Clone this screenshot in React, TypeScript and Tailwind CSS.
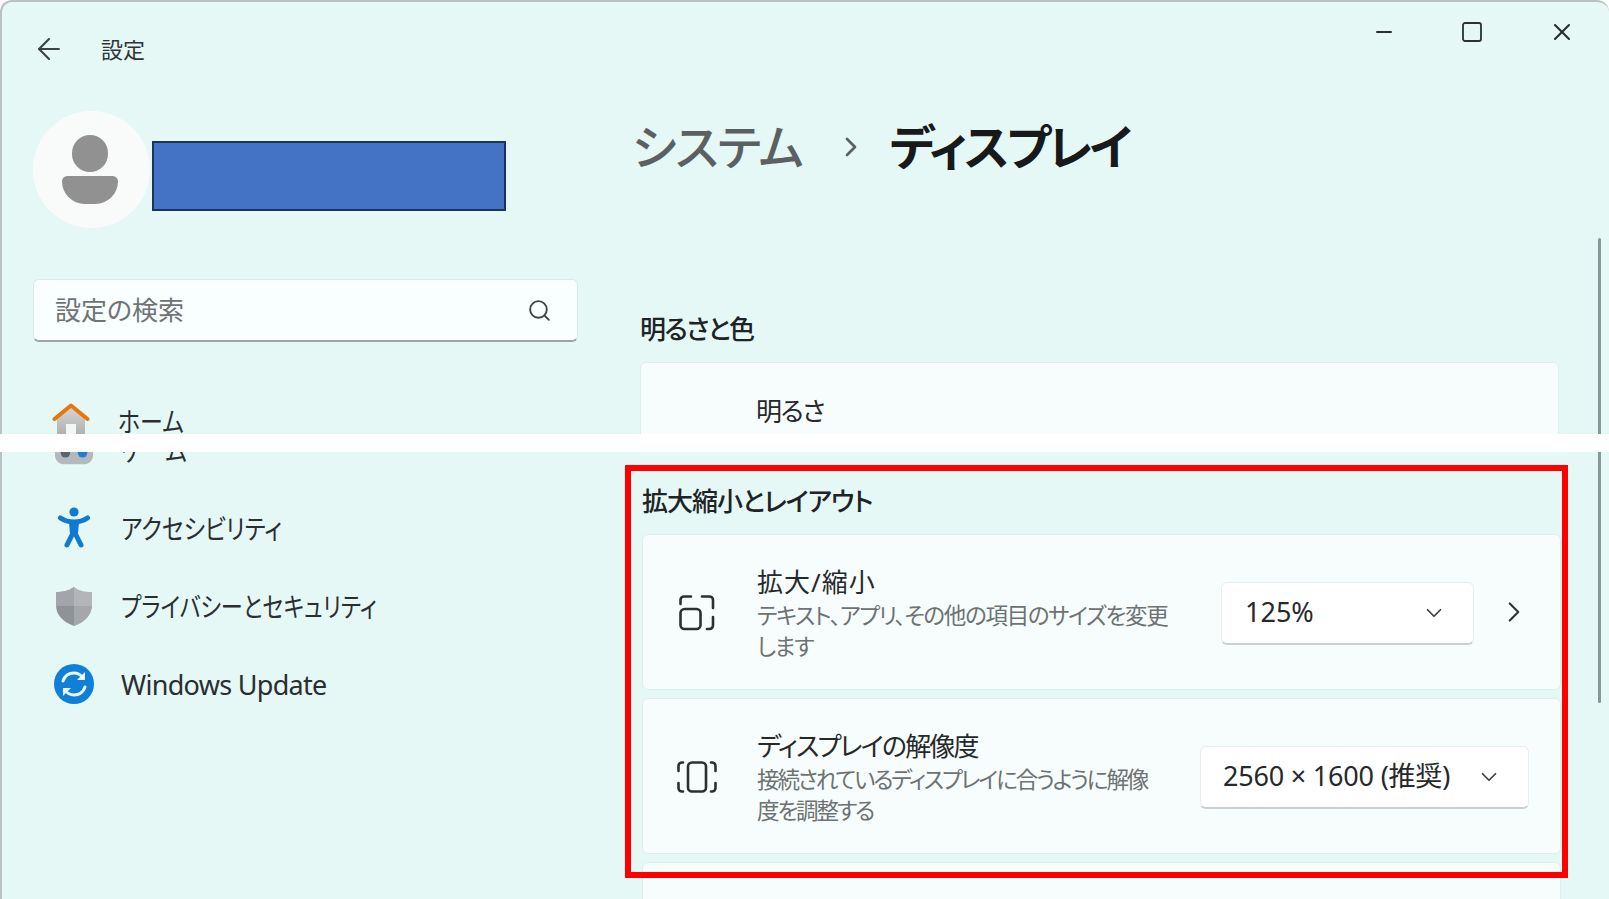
import React from 'react';
import { ArrowLeft, ChevronDown, ChevronRight, Minus, Search, Square, X } from 'lucide-react';

const HomeIcon = () => (
  <svg width="38" height="36" viewBox="0 0 38 36">
    <defs>
      <linearGradient id="homeBody" x1="0" y1="0" x2="0" y2="1">
        <stop offset="0" stopColor="#d8d8d8" />
        <stop offset="1" stopColor="#a9a9a9" />
      </linearGradient>
    </defs>
    <path d="M5 15 L19 3 L33 15 V36 H5 Z" fill="url(#homeBody)" />
    <rect x="14" y="21" width="10" height="15" fill="#f2f6f6" />
    <path d="M2.5 16 L19 2.5 L35.5 16" fill="none" stroke="#e8760f" strokeWidth="4" strokeLinecap="round" strokeLinejoin="round" />
  </svg>
);

const GameIcon = () => (
  <svg width="42" height="34" viewBox="0 0 42 34">
    <path d="M9 2 H33 C38 2 41 10 41 22 C41 29 36 32 31 32 H11 C6 32 1 29 1 22 C1 10 4 2 9 2 Z" fill="#b4b9bd" />
    <circle cx="12" cy="20" r="5" fill="#59646c" />
    <circle cx="30" cy="20" r="5" fill="#1f7fd6" />
  </svg>
);

const AccessIcon = () => (
  <svg width="34" height="42" viewBox="0 0 34 42">
    <circle cx="17" cy="5" r="4.6" fill="#0f7ad1" />
    <path d="M3.5 11 C8 14 12 15 17 15 C22 15 26 14 30.5 11 M17 15 V24 M17 24 L10 38 M17 24 L24 38" fill="none" stroke="#0f7ad1" strokeWidth="5" strokeLinecap="round" strokeLinejoin="round" />
    <path d="M12 15 H22 L21 27 H13 Z" fill="#0f7ad1" />
  </svg>
);

const ShieldIcon = () => (
  <svg width="38" height="40" viewBox="0 0 38 40">
    <path d="M19 1 C24 5 30 6 37 6 V19 C37 29 30 36 19 40 Z" fill="#b3b6b9" />
    <path d="M19 1 C14 5 8 6 1 6 V19 C1 29 8 36 19 40 Z" fill="#8f9397" />
    <path d="M19 20 H37 C36 29 30 36 19 40 Z" fill="#a5a8ab" />
    <path d="M19 1 V20 H1 V6 C8 6 14 5 19 1 Z" fill="#a2a5a9" />
  </svg>
);

const UpdateIcon = () => (
  <svg width="40" height="40" viewBox="0 0 40 40">
    <circle cx="20" cy="20" r="20" fill="#0f7fd8" />
    <path d="M9 17 C11 11 16 9 20 9 C24 9 27 11 29 14" fill="none" stroke="#e9f6ff" strokeWidth="3" strokeLinecap="round" />
    <path d="M31 8 V16 H23 Z" fill="#e9f6ff" />
    <path d="M31 23 C29 29 24 31 20 31 C16 31 13 29 11 26" fill="none" stroke="#e9f6ff" strokeWidth="3" strokeLinecap="round" />
    <path d="M9 32 V24 H17 Z" fill="#e9f6ff" />
  </svg>
);

const ScaleIcon = () => (
  <svg width="36" height="36" viewBox="0 0 36 36" fill="none" stroke="#2b3133" strokeWidth="2.6" strokeLinecap="round">
    <path d="M1.5 9 V5 C1.5 3 3 1.5 5 1.5 H12" />
    <path d="M23 1.5 H30 C32.5 1.5 34 3 34 5 V13" />
    <path d="M34 22 V30 C34 32.5 32.5 34 30 34 H28" />
    <rect x="1.5" y="14" width="20" height="20" rx="4" />
  </svg>
);

const ResolutionIcon = () => (
  <svg width="40" height="32" viewBox="0 0 40 32" fill="none" stroke="#2b3133" strokeWidth="2.6" strokeLinecap="round">
    <rect x="11" y="1.5" width="18" height="29" rx="4" />
    <path d="M6 1.5 H5 C3 1.5 1.5 3 1.5 5 V10" />
    <path d="M34 1.5 H35 C37 1.5 38.5 3 38.5 5 V10" />
    <path d="M6 30.5 H5 C3 30.5 1.5 29 1.5 27 V22" />
    <path d="M34 30.5 H35 C37 30.5 38.5 29 38.5 27 V22" />
  </svg>
);

// kana labels in the reference are much narrower than Noto's, Latin ones are not
const NavItem: React.FC<{ icon: React.ReactNode; label: string; labelClass?: string }> = ({
  icon,
  label,
  labelClass = 'origin-left scale-x-[0.85]',
}) => (
  <div className="h-[78px] flex items-center">
    <div className="w-[40px] ml-[20px] mr-[27px] flex-none flex justify-center">{icon}</div>
    <span className={`mt-[3px] text-[27px] whitespace-nowrap text-[#2a2e30] ${labelClass}`}>{label}</span>
  </div>
);

const SettingCard: React.FC<{
  icon: React.ReactNode;
  title: string;
  titleClass: string;
  subClass: string;
  lines: string[];
  children: React.ReactNode;
}> = ({ icon, title, titleClass, subClass, lines, children }) => (
  <div className="h-[156px] rounded-md bg-[#f7fdfc] border border-[#dcefec] flex items-center">
    <div className="w-[106px] mr-[8px] flex-none flex justify-center pl-[2px] mt-[2px]">{icon}</div>
    <div className="flex-1 min-w-0 pt-[4px]">
      <div className={`text-[26px] leading-[32px] text-[#26292b] whitespace-nowrap ${titleClass}`}>{title}</div>
      <div className="mt-[2px]">
        {lines.map((line) => (
          <div key={line} className={`text-[22.5px] leading-[31px] text-[#6d7273] whitespace-nowrap ${subClass}`}>
            {line}
          </div>
        ))}
      </div>
    </div>
    {children}
  </div>
);

const App: React.FC = () => {
  return (
    <div className="relative w-[1609px] h-[899px] overflow-hidden bg-white font-['Noto_Sans','Noto_Sans_CJK_JP',sans-serif] [font-feature-settings:'palt']">
      {/* Top half of the window */}
      <div className="h-[434px] overflow-hidden flex bg-[#e5f8f6] border-l-2 border-t-2 border-[#b9c2c1] rounded-tl-xl rounded-tr-xl">
        <div className="w-[623px] flex-none pl-[32px]">
          <div className="h-[94px] flex items-center">
            <ArrowLeft className="w-[34px] h-[34px] -ml-[2px] text-[#3a4245]" strokeWidth={1.5} />
            <span className="ml-[35px] text-[22px] text-[#2f3436]">設定</span>
          </div>
          <div className="h-[117px] mt-[15px] flex items-center">
            <div className="w-[117px] h-[117px] -ml-[1px] pr-[3px] rounded-full bg-[#f9fbfb] flex flex-col items-center justify-center flex-none">
              <div className="w-[36px] h-[37px] rounded-full bg-[#919191]" />
              <div className="w-[56px] h-[28px] mt-[4px] rounded-t-[6px] rounded-b-[26px] bg-[#919191]" />
            </div>
            <div className="ml-[2px] w-[354px] h-[70px] bg-[#4472c4] border-2 border-[#1a3360] mt-[12px]" />
          </div>
          <div className="mt-[51px] -ml-[1px] w-[545px] h-[63px] rounded-md bg-[#f9fefe] border border-[#d9eae8] border-b-2 border-b-[#9aa5a5] flex items-center justify-between pl-[21px] pr-[25px]">
            <span className="text-[26px] text-[#6e7475]">設定の検索</span>
            <Search className="w-[25px] h-[25px] text-[#3d4547]" strokeWidth={1.8} />
          </div>
          <div className="mt-[40px] -ml-[3px]">
            <NavItem icon={<HomeIcon />} label="ホーム" />
          </div>
        </div>
        <div className="flex-1 min-w-0 pl-[15px]">
          <div className="h-[60px] flex justify-end items-center pr-[22px]">
            <Minus className="w-[24px] h-[24px] text-[#2a2e30]" strokeWidth={2} />
            <Square className="ml-[64px] w-[24px] h-[24px] text-[#2a2e30]" strokeWidth={1.8} />
            <X className="ml-[64px] w-[28px] h-[28px] text-[#2a2e30]" strokeWidth={1.8} />
          </div>
          <div className="h-[60px] mt-[55px] -ml-[8px] flex items-center">
            <span className="text-[48px] font-medium tracking-[-1px] text-[#5b6163] whitespace-nowrap">システム</span>
            <ChevronRight className="ml-[32px] w-[32px] h-[32px] text-[#5b6163]" strokeWidth={2} />
            <span className="ml-[23px] text-[48px] font-semibold tracking-[-3px] text-[#17191a] whitespace-nowrap">ディスプレイ</span>
          </div>
          <div className="mt-[134px] text-[26px] leading-[36px] font-medium tracking-[-1.6px] text-[#202325]">明るさと色</div>
          <div className="mt-[15px] mr-[39px] h-[120px] rounded-t-md bg-[#f7fdfc] border border-[#dcefec] pl-[115px] pt-[30px]">
            <div className="text-[26px] leading-[36px] text-[#26292b] tracking-[-1.5px]">明るさ</div>
            <div className="mt-[1px] text-[22.5px] leading-[31px] text-[#6d7273] tracking-[-1.3px] whitespace-nowrap">内蔵ディスプレイの明るさを調整する</div>
          </div>
        </div>
        <div className="w-[3px] h-[198px] mt-[236px] mr-[8px] bg-[#87979a] flex-none rounded-full" />
      </div>

      {/* White strip between the two crops */}
      <div className="h-[18px]" />

      {/* Bottom half of the window */}
      <div className="h-[447px] overflow-hidden flex bg-[#e5f8f6] border-l-2 border-[#b9c2c1]">
        <div className="w-[623px] flex-none pl-[32px]">
          <div className="-mt-[41px]">
            <NavItem icon={<GameIcon />} label="ゲーム" />
            <NavItem icon={<AccessIcon />} label="アクセシビリティ" />
            <NavItem icon={<ShieldIcon />} label="プライバシーとセキュリティ" labelClass="origin-left scale-x-[0.82]" />
            <NavItem icon={<UpdateIcon />} label="Windows Update" labelClass="tracking-[-0.7px]" />
          </div>
        </div>
        <div className="flex-1 min-w-0 pl-[17px] pr-[37px]">
          <div className="h-[82px] pt-[30px] text-[26px] leading-[38px] font-medium tracking-[-1px] text-[#202325]">拡大縮小とレイアウト</div>
          <div className="flex flex-col gap-[8px]">
            <SettingCard
              icon={<ScaleIcon />}
              title="拡大/縮小"
              titleClass="tracking-[1px]"
              subClass="tracking-[-1.3px]"
              lines={['テキスト、アプリ、その他の項目のサイズを変更', 'します']}
            >
              <div className="w-[253px] h-[63px] mt-[2px] flex-none rounded-md bg-white border border-[#e6eeee] border-b-2 border-b-[#c8d0d0] flex items-center justify-between pl-[23px] pr-[26px] text-[27px] text-[#26292b]">
                125%
                <ChevronDown className="w-[26px] h-[26px] text-[#3a4245]" strokeWidth={1.6} />
              </div>
              <ChevronRight className="ml-[23px] mr-[29px] w-[34px] h-[34px] flex-none text-[#2f3436]" strokeWidth={1.5} />
            </SettingCard>
            <SettingCard
              icon={<ResolutionIcon />}
              title="ディスプレイの解像度"
              titleClass="tracking-[-1.8px]"
              subClass="tracking-[-2.1px]"
              lines={['接続されているディスプレイに合うように解像', '度を調整する']}
            >
              <div className="w-[329px] h-[63px] mt-[2px] flex-none mr-[31px] rounded-md bg-white border border-[#e6eeee] border-b-2 border-b-[#c8d0d0] flex items-center justify-between pl-[22px] pr-[26px] text-[27px] tracking-[-0.2px] text-[#26292b]">
                2560 × 1600 (推奨)
                <ChevronDown className="w-[26px] h-[26px] text-[#3a4245]" strokeWidth={1.6} />
              </div>
            </SettingCard>
            <div className="h-[80px] rounded-t-md bg-[#f7fdfc] border border-[#dcefec]" />
          </div>
        </div>
        <div className="w-[3px] h-[251px] mr-[8px] bg-[#87979a] flex-none rounded-b-full" />
      </div>

      {/* Red annotation frame */}
      <div className="absolute left-[625px] top-[465px] w-[943px] h-[413px] border-[6px] border-[#ff0000] pointer-events-none" />
    </div>
  );
};

export default App;
